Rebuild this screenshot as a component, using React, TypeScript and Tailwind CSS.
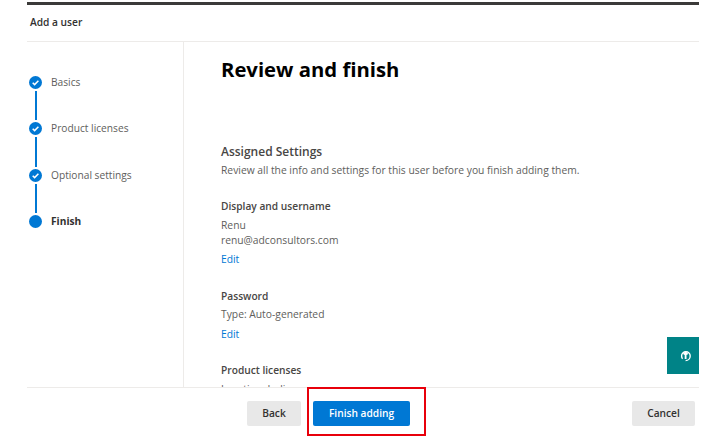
function Check() {
  return (
    <svg width="13" height="13" viewBox="0 0 13 13" className="shrink-0">
      <circle cx="6.5" cy="6.5" r="6.5" fill="#0078d4" />
      <path d="M3.7 6.7 5.6 8.6 9.4 4.7" fill="none" stroke="#fff" strokeWidth="1.5" />
    </svg>
  );
}

function Step({ label, last }: { label: string; last?: boolean }) {
  return (
    <div className="flex gap-[9px]">
      <div className="flex w-[13px] flex-col items-center">
        {last ? <div className="h-[13px] w-[13px] rounded-full bg-[#0078d4]" /> : <Check />}
        {!last && <div className="mt-[2px] mb-[2px] h-[29.4px] w-[2px] bg-[#0078d4]" />}
      </div>
      <span className={last ? "text-[10.2px] leading-[13px] font-bold text-[#323130]" : "text-[10.2px] leading-[13px] text-[#605e5c]"}>
        {label}
      </span>
    </div>
  );
}

export default function App() {
  return (
    <div className="relative h-[445px] w-[707px] overflow-hidden bg-white pt-[2px] pl-[27px] font-['Open_Sans','Noto_Sans',sans-serif]">
      <div className="flex h-[386px] w-[672px] flex-col">
        <div className="h-[3px] bg-[#3b3a39]" />
        <div className="flex h-[37px] items-center border-b border-[#edebe9] pl-[3px] text-[10.2px] font-semibold text-[#323130]">
          Add a user
        </div>
        <div className="flex min-h-0 flex-1 border-b border-[#edebe9]">
          <div className="w-[157px] shrink-0 border-r border-[#edebe9] pt-[34px] pl-[2px]">
            <Step label="Basics" />
            <Step label="Product licenses" />
            <Step label="Optional settings" />
            <Step label="Finish" last />
          </div>
          <div className="min-w-0 flex-1 overflow-hidden pt-[13px] pl-[37px]">
            <h1 className="text-[20.3px] leading-[28px] font-bold text-black">Review and finish</h1>
            <h2 className="mt-[60px] text-[12px] leading-[18px] font-semibold text-[#484644]">Assigned Settings</h2>
            <p className="mt-[2px] text-[10.3px] leading-[14px] text-[#605e5c]">
              Review all the info and settings for this user before you finish adding them.
            </p>
            <h3 className="mt-[22px] text-[10.2px] leading-[14px] font-semibold text-[#484644]">Display and username</h3>
            <p className="mt-[5px] text-[10.3px] leading-[15px] text-[#605e5c]">Renu</p>
            <p className="text-[10.3px] leading-[15px] text-[#605e5c]">renu@adconsultors.com</p>
            <a className="mt-[4px] block text-[10.3px] leading-[15px] text-[#0078d4]">Edit</a>
            <h3 className="mt-[22px] text-[10.2px] leading-[14px] font-semibold text-[#484644]">Password</h3>
            <p className="mt-[4px] text-[10.3px] leading-[15px] text-[#605e5c]">Type: Auto-generated</p>
            <a className="mt-[5px] block text-[10.3px] leading-[15px] text-[#0078d4]">Edit</a>
            <h3 className="mt-[21px] text-[10.2px] leading-[14px] font-semibold text-[#484644]">Product licenses</h3>
            <p className="mt-[5px] text-[10.3px] leading-[15px] text-[#605e5c]">Location: India</p>
          </div>
        </div>
      </div>
      <div className="flex w-[668px] items-start pt-[13px] pl-[220px]">
        <button className="h-[25px] w-[54px] rounded-[2px] bg-[#e8e8e8] text-[10.2px] font-semibold text-[#323130]">Back</button>
        <button className="ml-[12px] h-[25px] w-[97px] rounded-[2px] bg-[#0078d4] text-[10.2px] font-semibold text-white">Finish adding</button>
        <button className="ml-auto h-[25px] w-[63px] rounded-[2px] bg-[#e8e8e8] text-[10.2px] font-semibold text-[#323130]">Cancel</button>
      </div>
      <div className="absolute top-[387px] left-[307px] h-[49px] w-[119px] border-2 border-[#e8000b]" />
      <div className="absolute top-[337px] left-[667px] flex h-[37px] w-[32px] items-center justify-center bg-[#008387] pl-[6px]">
        <svg width="12" height="14" viewBox="0 0 12 14" fill="none">
          <path d="M2.6 9.8A4.2 4.2 0 0 1 1.6 7a4.3 4.3 0 1 1 8.6 0c0 2.8-2.2 4.6-4.6 4.6" stroke="#fff" strokeWidth="1.4" />
          <path d="M5.6 3.4v6.6M3.6 5.4l2-2 2 2" stroke="#fff" strokeWidth="1.8" />
        </svg>
      </div>
    </div>
  );
}
